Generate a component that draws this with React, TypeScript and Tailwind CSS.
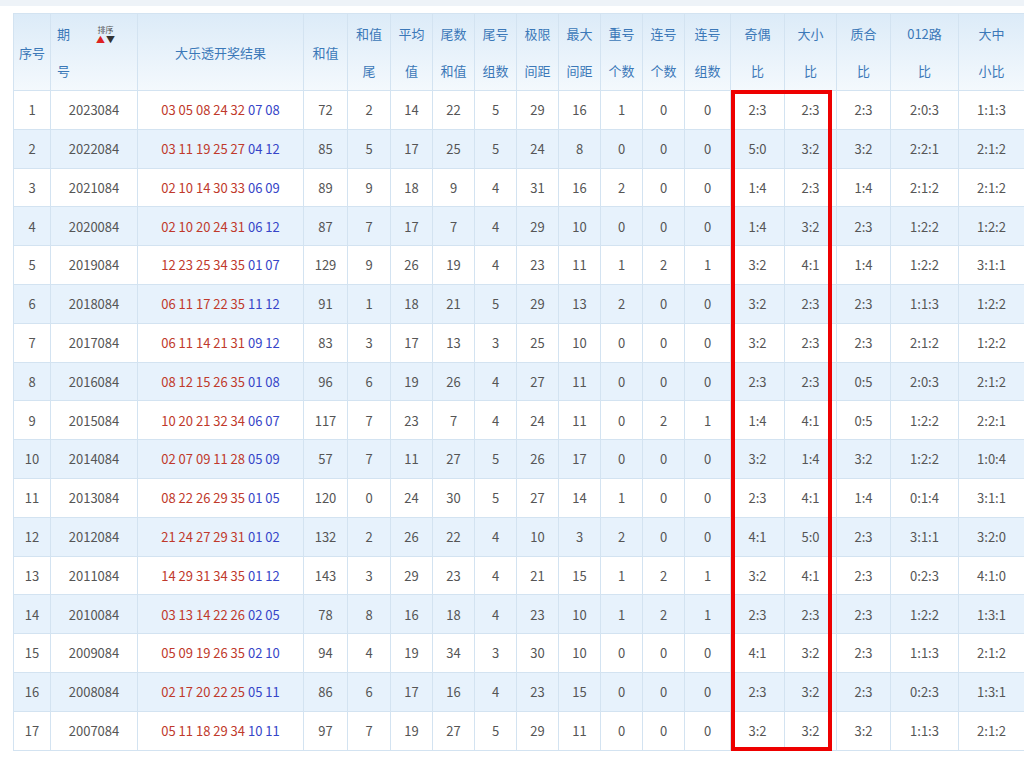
const cols = [37, 87, 166, 44, 43, 42, 42, 42, 42, 42, 42, 42, 46, 54, 52, 54, 68, 66];

const head: [string, string][] = [
  ["序号", ""], ["期", "号"], ["大乐透开奖结果", ""], ["和值", ""], ["和值", "尾"], ["平均", "值"],
  ["尾数", "和值"], ["尾号", "组数"], ["极限", "间距"], ["最大", "间距"], ["重号", "个数"], ["连号", "个数"],
  ["连号", "组数"], ["奇偶", "比"], ["大小", "比"], ["质合", "比"], ["012路", "比"], ["大中", "小比"],
];

const raw = `2023084|03 05 08 24 32|07 08|72 2 14 22 5 29 16 1 0 0 2:3 2:3 2:3 2:0:3 1:1:3
2022084|03 11 19 25 27|04 12|85 5 17 25 5 24 8 0 0 0 5:0 3:2 3:2 2:2:1 2:1:2
2021084|02 10 14 30 33|06 09|89 9 18 9 4 31 16 2 0 0 1:4 2:3 1:4 2:1:2 2:1:2
2020084|02 10 20 24 31|06 12|87 7 17 7 4 29 10 0 0 0 1:4 3:2 2:3 1:2:2 1:2:2
2019084|12 23 25 34 35|01 07|129 9 26 19 4 23 11 1 2 1 3:2 4:1 1:4 1:2:2 3:1:1
2018084|06 11 17 22 35|11 12|91 1 18 21 5 29 13 2 0 0 3:2 2:3 2:3 1:1:3 1:2:2
2017084|06 11 14 21 31|09 12|83 3 17 13 3 25 10 0 0 0 3:2 2:3 2:3 2:1:2 1:2:2
2016084|08 12 15 26 35|01 08|96 6 19 26 4 27 11 0 0 0 2:3 2:3 0:5 2:0:3 2:1:2
2015084|10 20 21 32 34|06 07|117 7 23 7 4 24 11 0 2 1 1:4 4:1 0:5 1:2:2 2:2:1
2014084|02 07 09 11 28|05 09|57 7 11 27 5 26 17 0 0 0 3:2 1:4 3:2 1:2:2 1:0:4
2013084|08 22 26 29 35|01 05|120 0 24 30 5 27 14 1 0 0 2:3 4:1 1:4 0:1:4 3:1:1
2012084|21 24 27 29 31|01 02|132 2 26 22 4 10 3 2 0 0 4:1 5:0 2:3 3:1:1 3:2:0
2011084|14 29 31 34 35|01 12|143 3 29 23 4 21 15 1 2 1 3:2 4:1 2:3 0:2:3 4:1:0
2010084|03 13 14 22 26|02 05|78 8 16 18 4 23 10 1 2 1 2:3 2:3 2:3 1:2:2 1:3:1
2009084|05 09 19 26 35|02 10|94 4 19 34 3 30 10 0 0 0 4:1 3:2 2:3 1:1:3 2:1:2
2008084|02 17 20 22 25|05 11|86 6 17 16 4 23 15 0 0 0 2:3 3:2 2:3 0:2:3 1:3:1
2007084|05 11 18 29 34|10 11|97 7 19 27 5 29 11 0 0 0 3:2 3:2 3:2 1:1:3 2:1:2`;

const rows = raw.split("\n").map((l) => {
  const [issue, red, blue, rest] = l.split("|");
  return { issue, red, blue, vals: rest.split(" ") };
});

export default function App() {
  return (
    <div className="w-[1024px] h-[760px] overflow-hidden bg-white" style={{ fontFamily: '"Noto Sans CJK SC", "Noto Sans", sans-serif' }}>
      <div className="h-[6px] bg-[#eef3f8]" />
      <div className="relative ml-[13px] mt-[7px]">
        <table className="border-collapse table-fixed text-[13px] text-[#555]" style={{ width: cols.reduce((a, b) => a + b, 0) }}>
          <colgroup>
            {cols.map((w, i) => <col key={i} style={{ width: w }} />)}
          </colgroup>
          <thead>
            <tr className="h-[77px] bg-gradient-to-b from-[#dcebf8] to-[#f4f9fd] text-[#3b78b8]">
              {head.map(([a, b], i) => (
                <th key={i} className="border border-[#d3e3f1] font-normal p-0 leading-[37px]">
                  {i === 1 ? (
                    <div className="flex justify-between pl-[6px] pr-[22px]">
                      <div className="text-left leading-[37px]"><div>期</div><div>号</div></div>
                      <div className="flex flex-col items-center pt-[9px]">
                        <div className="h-[11px] text-[8px] leading-[11px] text-[#555]">排序</div>
                        <div className="h-[10px] flex gap-[1px] text-[9px] leading-[10px]">
                          <span className="text-[#d22]">▲</span>
                          <span className="text-[#333]">▼</span>
                        </div>
                      </div>
                    </div>
                  ) : b ? (
                    <><div>{a}</div><div>{b}</div></>
                  ) : (
                    a
                  )}
                </th>
              ))}
            </tr>
          </thead>
          <tbody>
            {rows.map((r, i) => (
              <tr key={i} className={`h-[38.8px] ${i % 2 ? "bg-[#e7f2fc]" : "bg-white"}`}>
                <td className="border border-[#d3e3f1] text-center">{i + 1}</td>
                <td className="border border-[#d3e3f1] text-center">{r.issue}</td>
                <td className="border border-[#d3e3f1] text-center whitespace-nowrap">
                  <span className="text-[#c0392b]">{r.red}</span> <span className="text-[#3645c8]">{r.blue}</span>
                </td>
                {r.vals.map((v, j) => (
                  <td key={j} className="border border-[#d3e3f1] text-center">{v}</td>
                ))}
              </tr>
            ))}
          </tbody>
        </table>
        <div className="absolute left-[718px] top-[77px] w-[101px] h-[661px] border-[4px] border-[#ee0000] pointer-events-none" />
      </div>
    </div>
  );
}
